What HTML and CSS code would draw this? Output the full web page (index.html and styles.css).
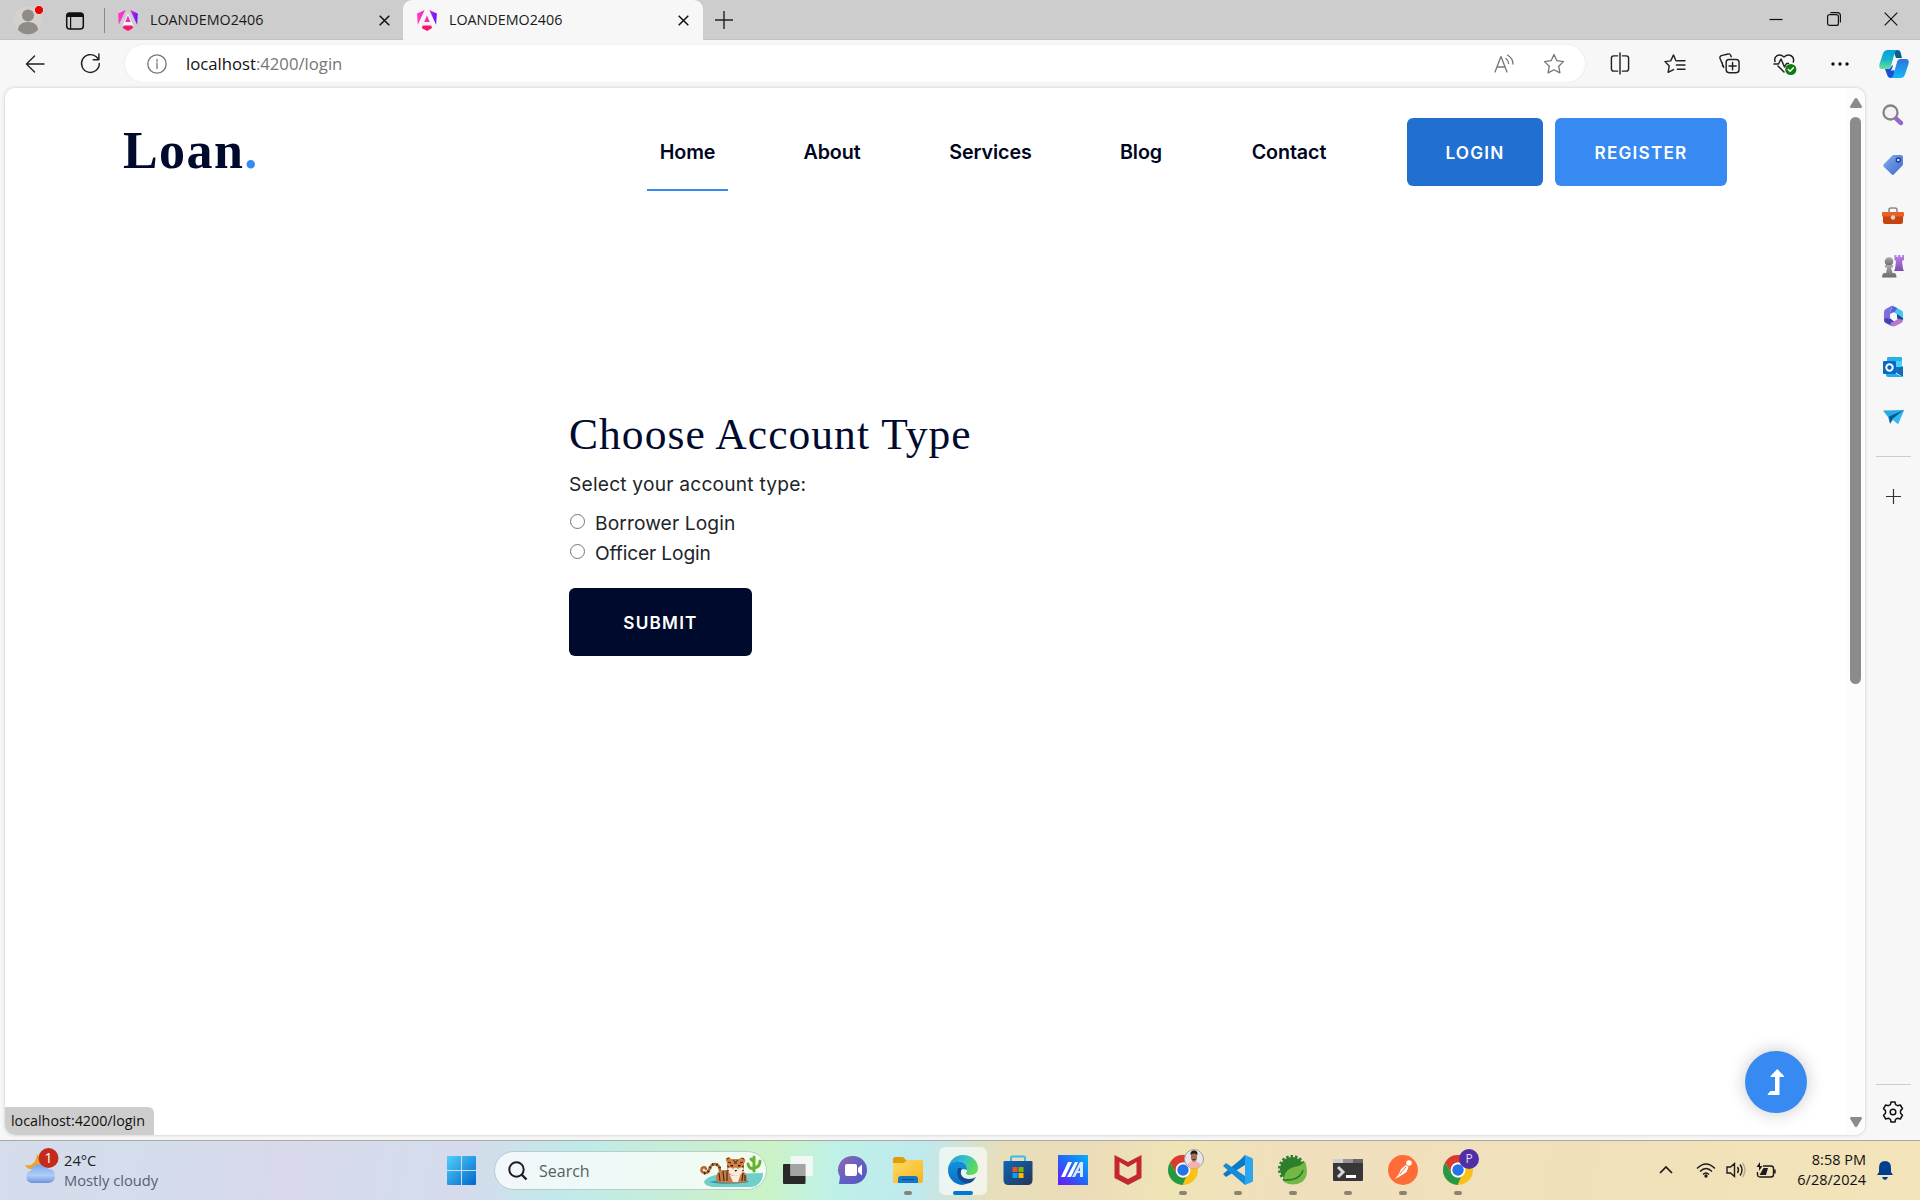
FILE: index.html
```
<!DOCTYPE html>
<html lang="en">
<head>
<meta charset="utf-8">
<title>LOANDEMO2406</title>
<link rel="stylesheet" href="styles.css">
</head>
<body>
<svg class="defs" aria-hidden="true">
  <defs>
    <linearGradient id="ng" gradientUnits="userSpaceOnUse" x1="20" y1="90" x2="215" y2="110"><stop offset="0" stop-color="#ff35c4"/><stop offset=".55" stop-color="#d925e0"/><stop offset="1" stop-color="#6a14f5"/></linearGradient>
    <linearGradient id="cloud" x1="0" y1="0" x2="0" y2="1"><stop offset="0" stop-color="#78a4ea"/><stop offset=".6" stop-color="#b1cdf8"/><stop offset="1" stop-color="#6d94dc"/></linearGradient>
    <linearGradient id="win" x1="0" y1="0" x2="1" y2="1"><stop offset="0" stop-color="#4fd0fb"/><stop offset="1" stop-color="#0067cc"/></linearGradient>
    <linearGradient id="folder" x1="0" y1="0" x2="1" y2="1"><stop offset="0" stop-color="#ffda62"/><stop offset="1" stop-color="#f7b51e"/></linearGradient>
    <linearGradient id="chat" x1="0" y1="0" x2="1" y2="1"><stop offset="0" stop-color="#9b62ae"/><stop offset=".4" stop-color="#6b63bd"/><stop offset="1" stop-color="#5157c9"/></linearGradient>
    <linearGradient id="store" x1="0" y1="0" x2="1" y2="1"><stop offset="0" stop-color="#0a69b8"/><stop offset="1" stop-color="#283257"/></linearGradient>
    <linearGradient id="arm" x1="1" y1="0" x2="0" y2="1"><stop offset="0" stop-color="#00b1ff"/><stop offset=".5" stop-color="#2467f4"/><stop offset="1" stop-color="#6d15f8"/></linearGradient>
    <linearGradient id="edgeTop" x1="0" y1="0" x2="1" y2=".4"><stop offset="0" stop-color="#1f9bd8"/><stop offset=".55" stop-color="#34c0cd"/><stop offset="1" stop-color="#5edb55"/></linearGradient>
    <linearGradient id="edgeLow" x1="0" y1="0" x2="0" y2="1"><stop offset="0" stop-color="#1292dc"/><stop offset="1" stop-color="#0b6fc9"/></linearGradient>
    <linearGradient id="copA" x1="0" y1="0" x2="0" y2="1"><stop offset="0" stop-color="#00a3dd"/><stop offset=".5" stop-color="#18b3cb"/><stop offset="1" stop-color="#67e58d"/></linearGradient>
    <linearGradient id="copB" x1="0" y1="0" x2="0" y2="1"><stop offset="0" stop-color="#3272d9"/><stop offset="1" stop-color="#10baf8"/></linearGradient>
    <linearGradient id="tag" x1="0" y1="0" x2="1" y2="1"><stop offset="0" stop-color="#82aef0"/><stop offset="1" stop-color="#3c69c9"/></linearGradient>
    <linearGradient id="grey" x1="0" y1="0" x2="0" y2="1"><stop offset="0" stop-color="#a9a9a9"/><stop offset="1" stop-color="#6c6c6c"/></linearGradient>
    <linearGradient id="violet" x1="0" y1="0" x2="0" y2="1"><stop offset="0" stop-color="#bd86e8"/><stop offset="1" stop-color="#7a4cb5"/></linearGradient>
    <symbol id="angular" viewBox="0 0 223 236">
      <path fill="#f4f0f4" d="m111 30-62 145 62 20 62-20z"/>
      <path fill="url(#ng)" d="m222 39-8 126L137 0zM8 165 0 39 85 0z"/>
      <path fill="#ec2fb9" d="m111 63 30 73H81z"/>
      <path fill="#f5156c" d="m169 202-58 33-58-33 12-28h92z"/>
    </symbol>
    <symbol id="chrome" viewBox="0 0 30 30">
      <circle cx="15" cy="15" r="15" fill="#fbc116"/>
      <path fill="#d93a31" d="M2 7.5A15 15 0 0 1 28 7.5H15a7.5 7.5 0 0 0-6.5 3.8L8.500 18.800z"/>
      <path fill="#249a48" d="M2 7.500 8.500 18.800a7.500 7.500 0 0 0 9.500 3.200L14.600 30A15 15 0 0 1 2 7.500z"/>
      <circle cx="15" cy="15" r="7.400" fill="#fff"/><circle cx="15" cy="15" r="5.700" fill="#2473e8"/>
    </symbol>
  </defs>
</svg>

<header class="titlebar">
  <div class="profile">
    <svg width="30" height="30" viewBox="0 0 30 30"><circle cx="14" cy="15" r="14" fill="#d5d1cb"/><circle cx="14" cy="10.500" r="6" fill="#8f8b87"/><path d="M4 25c0-5 4-8 10-8s10 3 10 8a14 14 0 0 1-20 0z" fill="#8f8b87"/><circle cx="25" cy="5" r="4.600" fill="#e60505" stroke="#f2dede"/></svg>
  </div>
  <div class="workspaces">
    <svg width="20" height="20" viewBox="0 0 20 20"><rect x="1.700" y="2" width="16.600" height="16" rx="3" fill="none" stroke="#111" stroke-width="1.500"/><path d="M2 6V4q0-2 2-2h12q2 0 2 2v2z" fill="#111"/><path d="M5.600 6v12" stroke="#111" stroke-width="1.200"/></svg>
  </div>
  <div class="tab">
    <svg width="20" height="21"><use href="#angular"/></svg>
    <span class="tab-title">LOANDEMO2406</span>
    <svg class="x" width="11" height="11" viewBox="0 0 11 11"><path d="m.7.7 9.600 9.600m0-9.600L.7 10.300"/></svg>
  </div>
  <div class="tab active">
    <svg width="20" height="21"><use href="#angular"/></svg>
    <span class="tab-title">LOANDEMO2406</span>
    <svg class="x" width="11" height="11" viewBox="0 0 11 11"><path d="m.7.7 9.600 9.600m0-9.600L.7 10.300"/></svg>
  </div>
  <svg class="new-tab" width="18" height="18" viewBox="0 0 18 18"><path d="M9 0v18M0 9h18"/></svg>
  <div class="window-controls">
    <svg width="14" height="14" viewBox="0 0 14 14"><path d="M.5 7.500h13"/></svg>
    <svg width="14" height="14" viewBox="0 0 14 14"><rect x=".6" y="2.600" width="10.800" height="10.800" rx="2"/><path d="M3.400.6h7q3 0 3 3v7"/></svg>
    <svg width="14" height="14" viewBox="0 0 14 14"><path d="m.7.7 12.600 12.600m0-12.600L.7 13.300"/></svg>
  </div>
</header>

<nav class="toolbar">
  <div class="slot back"><svg width="20" height="18" viewBox="0 0 22 20"><path d="M21 10H1.500M10.500 1l-9 9 9 9"/></svg></div>
  <div class="slot reload"><svg width="21" height="21" viewBox="0 0 22 22"><path d="M20.200 11A9.300 9.300 0 1 1 17 4l2.500 2.500M19.800 1v6h-6"/></svg></div>
  <div class="address">
    <svg width="20" height="20" viewBox="0 0 20 20"><circle cx="10" cy="10" r="9.200"/><path d="M10 9v5.500M10 5.400v1.800"/></svg>
    <span class="url">localhost<span>:4200/login</span></span>
    <svg class="read" width="20" height="19" viewBox="0 0 20 19"><path d="m1 18 6-15.500L13 18M3 13h8M12 4.500q2.600 2 2.600 5M13.500 1q5.500 3.300 5.500 9"/></svg>
    <svg width="22" height="22" viewBox="0 0 22 22"><path d="m11 1.500 2.900 6.200 6.600.9-4.800 4.600 1.200 6.700L11 16.700l-5.900 3.200 1.200-6.700L1.500 8.600l6.600-.9z"/></svg>
  </div>
  <div class="slot"><svg width="20" height="21" viewBox="0 0 20 22"><path d="M7.500 3H3.500Q1 3 1 5.500v11Q1 19 3.500 19h4M12.500 3h4Q19 3 19 5.500v11q0 2.500-2.500 2.500h-4M10 0v22"/></svg></div>
  <div class="slot"><svg width="21" height="22" viewBox="0 0 22 22"><path d="M13 7.700h-.5L10 1.500 7 7.700l-6 .8 4.500 4.500-1.200 6.800 5.700-3M14 7.600h8M13 12h9M14 16.500h8"/></svg></div>
  <div class="slot"><svg width="21" height="21" viewBox="0 0 22 22"><path d="M5 15 1 5.500Q.5 3.500 2.500 2.700L9.500 1q2-.5 2.700 1.500l.6 1.500M5 15q-2-2-1.500-4.500"/><rect x="7.500" y="6.800" width="13.500" height="13.800" rx="3"/><path d="M14.200 10v7.500M10.500 13.700H18"/></svg></div>
  <div class="slot"><svg width="24" height="24" viewBox="0 0 24 24"><path d="M2 9.500C.5 4.500 6 .5 11 5c5-4.500 11-.5 9.300 5M1 12h4.500l2.500-5 3.500 8 2-3.500h2M5 14l6 6"/><circle cx="17.800" cy="17.500" r="5.600" fill="#107c10" stroke="none"/><path stroke="#fff" d="m15.300 17.500 1.800 1.800 3.300-3.500"/></svg></div>
  <div class="slot"><svg width="18" height="4" viewBox="0 0 18 4"><g fill="#111" stroke="none"><circle cx="2" cy="2" r="1.700"/><circle cx="9" cy="2" r="1.700"/><circle cx="16" cy="2" r="1.700"/></g></svg></div>
  <div class="slot copilot"><svg width="30" height="28" viewBox="0 0 30 28"><g stroke="none"><path fill="#0b5e91" d="M14 0h5q2 0 2.700 2.500L23 8h-6z"/><path fill="url(#copA)" d="M9 0h10q-2.500 0-3.300 3L12 16q-.8 3-3.500 3H3.500Q-.8 19 .5 14L4 3.500Q5 0 9 0z"/><path fill="#1b4fd7" d="M6 19h3q2.500 0 3.500-3l1.500-1 3 13h-5q-3 0-3.800-3z"/><path fill="url(#copB)" d="M21 28H11q2.500 0 3.300-3L18 12q.8-3 3.500-3h5q4.300 0 3 5L26 24.500Q25 28 21 28z"/><path fill="#f7f7f7" d="M15.500 8.500h5q-2.200.8-3 3.500l-2 7q-.5 1.500-2 1.500h-2q1.300-.8 1.800-2.500z"/></g></svg></div>
</nav>

<div class="workarea">
  <main class="page">
    <div class="content">
      <header class="site-header">
        <a class="logo">Loan<span>.</span></a>
        <nav class="menu"><a class="selected">Home</a><a>About</a><a>Services</a><a>Blog</a><a>Contact</a></nav>
        <div class="actions"><a class="btn login">LOGIN</a><a class="btn register">REGISTER</a></div>
      </header>
      <form class="account">
        <h2>Choose Account Type</h2>
        <p>Select your account type:</p>
        <label><i class="radio"></i>Borrower Login</label>
        <label class="officer"><i class="radio"></i>Officer Login</label>
        <button class="btn submit" type="button">SUBMIT</button>
      </form>
      <a class="to-top"><svg width="18" height="26" viewBox="0 0 18 26"><path fill="#fff" d="M10.300 0 17 7q.5 1-.7 1h-3.800v18H2q-2 0-1-1.200L3.500 22H8V8H4.300Q3 8 3.600 7z"/></svg></a>
      <div class="status">localhost:4200/login</div>
    </div>
    <div class="scrollbar">
      <svg width="12" height="10" viewBox="0 0 12 10"><path d="M6 0q1 0 1.500 1L12 8.500Q12 10 11 10H1Q0 10 0 8.500L4.500 1Q5 0 6 0z"/></svg>
      <div class="thumb"></div>
      <svg width="12" height="10" viewBox="0 0 12 10"><path d="M6 10q-1 0-1.500-1L0 1.500Q0 0 1 0h10q1 0 1 1.500L7.500 9Q7 10 6 10z"/></svg>
    </div>
  </main>
  <aside class="sidebar">
    <div class="app"><svg width="22" height="22" viewBox="0 0 22 22"><circle cx="8.500" cy="8.500" r="7" fill="#f3f3f3" stroke="#858585" stroke-width="2.300"/><path d="m14.500 15 4.500 4" stroke="#9467cb" stroke-width="4.400" stroke-linecap="round"/></svg></div>
    <div class="app"><svg width="22" height="22" viewBox="0 0 22 22"><path fill="url(#tag)" d="M12 1h7q2 0 2 2v7q0 1-.8 1.800L12 20.300q-1.200 1.200-2.500 0l-7.700-7.600q-1.200-1.200 0-2.500l8.400-8.400Q11 1 12 1z"/><circle cx="16.300" cy="6" r="2" fill="#c8dcf7" stroke="#1f3c8f" stroke-width="1.300"/></svg></div>
    <div class="app"><svg width="22" height="18" viewBox="0 0 22 18"><path d="M7 6V3q0-2 2-2h4q2 0 2 2v3" fill="none" stroke="#8a8a8a" stroke-width="1.600"/><path fill="#c8420f" d="M1 8h20v7q0 2-2 2H3q-2 0-2-2z"/><path fill="#ea6026" d="M1 5h20q1 0 1 1v3.500H0V6q0-1 1-1z"/><circle cx="11" cy="10.500" r="2.200" fill="#d7d7d7"/></svg></div>
    <div class="app"><svg width="22" height="23" viewBox="0 0 22 23"><path fill="url(#violet)" d="M12.500 0h2v2H16V0h2.500v2H20V0h2v5l-2 1 1 8 1 2H12l1-2 1-8-1.500-1z"/><g fill="url(#grey)"><circle cx="7" cy="6.500" r="4.300"/><path d="M3 10h8v2.500H9L10.500 18H13q1.500 1 1.500 4.500H0Q0 19 1.500 18H4l1.200-5.500H3z"/></g></svg></div>
    <div class="app"><svg width="21" height="22" viewBox="0 0 22 22"><path fill="#4cc4f0" d="m10 0 9.500 5.200Q21 6 21 8v5l-7-4-6-1z"/><path fill="#5462d7" d="M10 .5 15 3l-3 4-5 2z"/><path fill="#7d6edc" d="M10 .2 8 5v9q-5-2-6.500 2Q1 16 1 15V7q0-2 1.500-3L8 .7Q9 0 10 .2z"/><path fill="#3f45b4" d="M8 8v6l4 3-2.500 4.800L2.500 18Q1 17 1 15q2-3 7-1z"/><path fill="#b977d0" d="m8 18 4-1.500 4-3 5-.5v2q0 2-1.500 3L13 21.500q-2 1-4 0-2-1.500-1-3.500z"/><path fill="#174f9e" d="m14 8.500 7 4.500v2l-6-1z"/><path fill="#f7f7f7" d="m11 7 3.700 2v4L11 15.200 7.500 13V9z"/></svg></div>
    <div class="app"><svg width="20" height="20" viewBox="0 0 20 20"><path fill="#28aee8" d="M5 0h13q1 0 1 1v12H4V1q0-1 1-1z"/><path fill="#0c74c4" d="M4 5h15v9H4z"/><path fill="#48d0f7" d="M12 4h7v6h-7z"/><path fill="#126bb5" d="m20 9-8 6 8 5z"/><path fill="#20aeec" d="m3 12 17 8H5q-2 0-2-2z"/><rect y="4" width="13" height="13" rx="1" fill="#0869c4"/><circle cx="6.500" cy="10.500" r="3.200" fill="none" stroke="#fff" stroke-width="2"/></svg></div>
    <div class="app"><svg width="21" height="16" viewBox="0 0 21 16"><path fill="#2aabe8" d="M0 1.500 21 1l-6 14-5-4-3 3-2-6z"/><path fill="#07588f" d="M21 1 6 7.500 7 15l2.500-5z"/><path fill="#35b8ef" d="M21 1 9.500 10l5.500 5z"/></svg></div>
    <hr>
    <div class="app add"><svg width="15" height="15" viewBox="0 0 15 15"><path d="M7.500 0v15M0 7.500h15" stroke="#333" stroke-width="1.200"/></svg></div>
    <hr class="lower">
    <div class="app gear"><svg width="22" height="22" viewBox="0 0 22 22"><path fill="none" stroke="#111" stroke-width="1.500" stroke-linejoin="round" d="m9 1-.6 2.600-2 1.100L3.700 4l-2.200 3.700 2 1.900v2.700l-2 1.900L3.700 18l2.700-.8 2 1.200L9 21h4l.6-2.600 2-1.200 2.700.8 2.200-3.800-2-1.900V9.600l2-1.900L18.300 4l-2.700.7-2-1.100L13 1z"/><circle cx="11" cy="11" r="2.800" fill="none" stroke="#111" stroke-width="1.500"/></svg></div>
  </aside>
</div>

<footer class="taskbar">
  <div class="weather">
    <svg width="36" height="40" viewBox="0 0 36 40"><path fill="#f3a229" d="M13 7q7 6 3 15L6 22q-4-1-5-4 11 2 12-11z"/><path fill="url(#cloud)" d="M7 36a6.500 6.500 0 0 1 0-12.500Q9 17 16 17q6 0 8.500 5 6.500 0 6.500 7t-7 7z"/><circle cx="24.500" cy="11" r="10" fill="#c42b1c"/><text x="24.500" y="16" text-anchor="middle" class="badge">1</text></svg>
    <div class="weather-text"><b>24°C</b><span>Mostly cloudy</span></div>
  </div>
  <div class="start"><svg width="29" height="29" viewBox="0 0 29 29"><path fill="url(#win)" d="M1 0h13v14H0V1Q0 0 1 0zM15 0h13q1 0 1 1v13H15zM0 15h14v14H1q-1 0-1-1zM15 15h14v13q0 1-1 1H15z"/></svg></div>
  <div class="search">
    <svg width="20" height="20" viewBox="0 0 20 20"><circle cx="8.500" cy="8.500" r="7.200" fill="none" stroke="#1c1c1c" stroke-width="2"/><path d="m13.500 13.500 5 5" stroke="#1c1c1c" stroke-width="2.400"/></svg>
    <span>Search</span>
    <svg width="64" height="34" viewBox="0 0 64 34">
      <path fill="#6fd0c9" d="M4 28q2-6 18-8l41-1q0 8-6 12-2 2-8 2H16Q5 33 4 28z"/>
      <path fill="#2b8fb0" d="M9 28q18-4 37-2 6 2-2 3-22 2-35-1z"/>
      <path fill="none" stroke="#63b32e" stroke-width="3" stroke-linecap="round" d="M54 17V3M54 15q-5 0-6-5M54 14q6-1 6-7M54 8l-3-3"/>
      <path fill="none" stroke="#b7642c" stroke-width="2.600" stroke-linecap="round" d="M5 19q-5-1-3-5 3-2 4 1M5 19c6 1 3-9 10-9q5 1 5 7"/>
      <path fill="none" stroke="#3d2417" stroke-width="2.800" stroke-dasharray="1.200 3" d="M4 19c7 1 4-9 11-9q5 1 5 7"/>
      <path fill="#c97d45" d="M16 28q-1-12 8-12h15q9 1 8 12-15 2-31 0z"/>
      <path fill="none" stroke="#432a1d" stroke-width="1.200" d="m19 19 1 8m3-10 1 10m3-10 0 10m16-8-1 8m3-6v6"/>
      <path fill="#f8efe3" d="M29 19h12l-3 9h-5z"/>
      <path fill="#cf8149" d="M26 4q4-2 5 1h8q2-3 6 0 1 3-1 4v6q-2 7-9 7t-8-7V9q-2-3-1-5z"/>
      <path fill="#f8eada" d="M27 15q4-3 6 0 3-3 5 0 3-3 6 0-2 7-8 7t-9-7z"/>
      <path fill="none" stroke="#392318" stroke-width="1" d="m33 6 2.500 2L38 6M34 9h3M28 8l3 1m12-1-3 1M27 12l2 1m15-1-2 1M27 5l2-1m13 0 2 1M27 16l2 1m15-1-2 1"/>
      <path fill="#2b1a12" d="M30.500 11h2.500v1.500h-2.500zM38 11h2.500v1.500H38zM34.300 16h3l-1.500 1.800z"/>
    </svg>
  </div>
  <div class="apps">
    <div class="task"><svg width="30" height="30" viewBox="0 0 30 30"><rect y="9" width="22.500" height="20" rx="1" fill="#292929"/><rect x="7.500" y="1" width="22.500" height="20" rx="1" fill="#f8f8f8" fill-opacity=".86"/><path fill="#a4a4a4" d="M7.500 9h15v12h-15z"/></svg></div>
    <div class="task"><svg width="30" height="30" viewBox="0 0 30 30"><path fill="url(#chat)" d="M15 1a14 14 0 1 1 0 28H1l1-7A14 14 0 0 1 15 1z"/><rect x="7" y="9" width="12" height="12" rx="2" fill="#fff"/><path fill="#fff" d="m20 13 4-3.500v11L20 17z"/></svg></div>
    <div class="task open"><svg width="30" height="30" viewBox="0 0 30 30"><path fill="#e19d08" d="M0 4q0-2 2-2h8l3 3h16v5H0z"/><path fill="url(#folder)" d="M0 8h11l3-3h15q1 0 1 1v20q0 2-2 2H0z"/><path fill="#1477c7" d="M5 28v-4q0-3 3-3h14q3 0 3 3v4z"/><path stroke="#0b4a86" d="M9 24.500h12.500"/></svg></div>
    <div class="task current"><svg width="30" height="30" viewBox="0 0 30 30"><path fill="url(#edgeLow)" d="M0 15C0 9 4 6 9 6c7 0 11 4 10 9l-4-1q-3 1-3 5c0 6 5 10 10 8q-4 3-8 3A15 15 0 0 1 0 15z"/><path fill="#104e94" d="M10 13c-3 10 4 17 12 15q4-2 6-6-3 2-7 2c-6 0-9-4-8-8 0-2 1-3 1-3z"/><path fill="url(#edgeTop)" d="M0 14C1 6 7 0 15 0c9 0 15 6 15 13q0 7-8 7-4 0-4-2 1-1 1-3 0-8-9-9Q2 6 0 14z"/></svg></div>
    <div class="task"><svg width="30" height="30" viewBox="0 0 30 30"><path d="M8 7V3q0-1.500 1.500-1.500h11Q22 1.500 22 3v4" fill="none" stroke="#32bdee" stroke-width="2"/><path fill="url(#store)" d="M1.500 6h27q1 0 1 1v18q0 5-5 5h-19q-5 0-5-5V7q0-1 1-1z"/><path fill="#f25022" d="M9.500 12h5v5h-5z"/><path fill="#7fba00" d="M15.500 12h5v5h-5z"/><path fill="#00a4ef" d="M9.500 18h5v5h-5z"/><path fill="#ffb900" d="M15.500 18h5v5h-5z"/></svg></div>
    <div class="task"><svg width="30" height="30" viewBox="0 0 30 30"><path fill="url(#arm)" d="M0 0h30v30H0z"/><path fill="#fff" d="M10 7h4L7 22H3zM17 7h3l-7 15h-4z"/><path fill="#dce9ff" d="M22 7h3v15h-3v-4h-3l-2 4h-3zm0 5-2 4h2z" fill-rule="evenodd"/></svg></div>
    <div class="task"><svg width="30" height="30" viewBox="0 0 30 30"><path fill="#c1292e" d="m1.500 0 13.500 7L28.500 0v23L15 30 1.500 23zm5 7v12.500L15 24l8.500-4.500V7L15 12z" fill-rule="evenodd"/></svg></div>
    <div class="task open"><svg width="30" height="30"><use href="#chrome"/></svg><svg class="person" width="20" height="20" viewBox="0 0 20 20"><circle cx="10" cy="10" r="9.500" fill="#e7e5ea" stroke="#a79f99"/><path fill="#f1b3ae" d="M3 16q3-4 7-4t7 4q-3 3.500-7 3.500T3 16z"/><path fill="#a56d55" d="M7 4h6v6q-1 3-3 3t-3-3z"/><path fill="#221b1b" d="M6.500 6q-.5-4.500 3.500-4.500T13.500 6Q13 4.500 10 4.500T6.500 6zM8.500 10h3v.8h-3z"/></svg></div>
    <div class="task open"><svg width="30" height="30" viewBox="0 0 30 30"><path fill="#0b79c8" d="m0 19 17-14 5-5v10L3 22z"/><path fill="#168bd8" d="m0 11 3-3 19 13v9z"/><path fill="#28a6f0" d="m22 0 7 3q1 .5 1 1.500v21q0 1-1 1.500l-7 3z"/></svg></div>
    <div class="task open"><svg width="30" height="30" viewBox="0 0 30 30"><circle cx="14" cy="14" r="12" fill="#2d7f2d"/><circle cx="14" cy="14" r="12.800" fill="none" stroke="#2d7f2d" stroke-width="2.500" stroke-dasharray="2.500 2"/><path fill="#72b843" d="M6 27q-1-12 10-15 8-1 11-6 5 15-3 21-9 5-18 0z"/><path fill="none" stroke="#2d7f2d" stroke-width="1.600" d="M5 25q17 1 20-10"/></svg></div>
    <div class="task open"><svg width="30" height="30" viewBox="0 0 30 30"><path fill="#373737" d="M1 4h28q1 0 1 1v20q0 1-1 1H1q-1 0-1-1V5q0-1 1-1z"/><path fill="#cfcfcf" d="M0 4h10v4H0z"/><path fill="#949494" d="M10 4h10v4H10z"/><path fill="#666" d="M20 4h10v4H20z"/><path d="m5 12 5 5-5 5" fill="none" stroke="#d6d6d6" stroke-width="3"/><path stroke="#fff" stroke-width="3" d="M13 21.500h10"/></svg></div>
    <div class="task open"><svg width="30" height="30" viewBox="0 0 30 30"><circle cx="15" cy="15" r="15" fill="#ff6c37"/><circle cx="21" cy="8" r="2.800" fill="#fff"/><path d="m7 24 4-5 2-5 5-4 2.500 2-2 5-6 4z" fill="#fff"/><path d="m18 12-6 7" stroke="#ff6c37"/></svg></div>
    <div class="task open"><svg width="30" height="30"><use href="#chrome"/></svg><span class="person initial">P</span></div>
  </div>
  <div class="tray">
    <svg width="14" height="8" viewBox="0 0 14 8"><path d="m1 7 6-6 6 6" stroke-width="1.700"/></svg>
    <svg class="wifi" width="20" height="15" viewBox="0 0 20 15"><path d="M1 5.500Q10-3.500 19 5.500M4 8.500q6-6 12 0M7 11.500q3-3 6 0"/><circle cx="10" cy="13" r="1" fill="#1b1b1b"/></svg>
    <svg class="volume" width="20" height="16" viewBox="0 0 20 16"><path d="M1 5h3.500l4-3.500v13l-4-3.500H1zM11.500 5q2 3 0 6M14 2.500q4 5.500 0 11"/><path d="M16.500 1q5 7 0 14" stroke="#b5aa92"/></svg>
    <svg class="battery" width="21" height="17" viewBox="0 0 21 17"><path d="M7 4h8q2.500 0 2.500 2.500v6Q17.500 15 15 15H4q-2.500 0-2.500-2.500V10M19 7.500v4"/><path d="M3.500 13h6.500l2-7H7.500zM4 0 .5 5H3v4l3.500-5H4z" fill="#1b1b1b" stroke="none"/></svg>
    <div class="clock"><span>8:58 PM</span><span>6/28/2024</span></div>
    <svg class="bell" width="16" height="19" viewBox="0 0 16 19"><path fill="#003e92" stroke="none" d="M8 0q6 0 6 7v4l2 3H0l2-3V7q0-7 6-7zM5 16h6q-1 3-3 3t-3-3z"/></svg>
  </div>
</footer>
</body>
</html>
```
FILE: styles.css
```
* { box-sizing: border-box; }
body {
  margin: 0;
  width: 1920px;
  height: 1200px;
  display: flex;
  flex-direction: column;
  overflow: hidden;
  background: #f7f7f7;
  color: #111;
  font-family: "Open Sans", "Noto Sans", sans-serif;
}
svg { display: block; flex: none; overflow: visible; }
.defs { position: absolute; width: 0; height: 0; }

/* Window title bar */
.titlebar {
  height: 40px;
  flex: none;
  display: flex;
  align-items: center;
  background: #cdcdcd;
  box-shadow: inset 0 -1px #c2c2c2;
}
.profile { padding-left: 14px; width: 60px; }
.workspaces { width: 45px; height: 25px; padding: 3px 0 0 5px; border-right: 1px solid #888; }
.tab { width: 298px; height: 40px; padding: 0 13px; display: flex; align-items: center; }
.tab.active { width: 300px; padding-left: 14px; background: #f7f7f7; border-radius: 9px 9px 0 0; }
.tab-title { flex: 1; margin-left: 12px; font-size: 14.300px; line-height: 38px; color: #1a1a1a; }
.x { fill: none; stroke: #111; stroke-width: 1.500; }
.active .x { margin-right: 1px; }
.new-tab { margin-left: 12px; stroke: #222; stroke-width: 1.400; }
.window-controls { margin-left: auto; padding: 0 22px 2px 0; display: flex; gap: 43.500px; }
.window-controls svg { fill: none; stroke: #111; stroke-width: 1.200; }

/* Navigation toolbar */
.toolbar { height: 47px; flex: none; display: flex; align-items: center; }
.toolbar svg { fill: none; stroke: #222; stroke-width: 1.500; stroke-linecap: round; stroke-linejoin: round; }
.slot { width: 55px; display: flex; justify-content: center; }
.back { width: 70px; }
.reload { width: 40px; margin-right: 15px; }
.address {
  width: 1460px;
  height: 37px;
  margin-right: 7px;
  padding: 0 20px 0 22px;
  display: flex;
  align-items: center;
  background: #fff;
  border-radius: 19px;
  box-shadow: 0 0 3px #e6e6e6;
}
.address svg { stroke: #757575; stroke-width: 1.300; }
.url { flex: 1; margin-left: 19px; font-size: 16.700px; }
.url span { color: #767676; }
.read { margin-right: 29px; }
.copilot { width: 53px; }

/* Page viewport */
.workarea { flex: 1; display: flex; min-height: 0; }
.page {
  position: relative;
  width: 1862px;
  height: 1049px;
  margin-left: 4px;
  display: flex;
  background: #fff;
  border: 1px solid #e4e4e4;
  border-radius: 11px;
  box-shadow: 0 0 3px #ddd;
  overflow: hidden;
}
.content { flex: 1; font-family: Inter, Roboto, sans-serif; }
.site-header { height: 128px; padding-left: 118px; display: flex; align-items: center; }
.logo {
  width: 524px;
  margin-top: -2px;
  font: bold 52px/64px "Liberation Serif", serif;
  letter-spacing: 1.400px;
  color: #000a2d;
}
.logo span { color: #368af1; }
.menu {
  display: grid;
  grid-template-columns: 81px 85px 109px 69px 104px;
  column-gap: 61.500px;
  font-size: 19.700px;
  font-weight: 600;
  color: #00051f;
  letter-spacing: -.1px;
  text-align: center;
}
.menu a { height: 77px; line-height: 77px; white-space: nowrap; }
.menu .selected { border-bottom: 2px solid #368af1; }
.actions { display: flex; gap: 12px; margin-left: 66px; }
.btn {
  height: 68px;
  display: flex;
  align-items: center;
  justify-content: center;
  border-radius: 6px;
  border: 0;
  color: #fff;
  font: 600 17.200px Inter, Roboto, sans-serif;
  letter-spacing: 1.200px;
}
.login { width: 136px; background: #2170d1; }
.register { width: 172px; background: #368af1; }
.account { margin: 190px 0 0 564px; font-size: 19.200px; color: #212529; }
.account h2 {
  margin: 0;
  font: 400 43.500px/56px "Liberation Serif", serif;
  letter-spacing: 1.050px;
  color: #000a2d;
}
.account p { margin: 7px 0 9px; line-height: 30px; letter-spacing: .2px; }
.account label { display: flex; align-items: center; height: 30px; letter-spacing: .1px; }
.account .officer { letter-spacing: -.15px; }
.radio { width: 15px; height: 15px; margin: -3px 10px 0 1px; border: 1px solid #767676; border-radius: 50%; }
.submit { width: 183px; margin-top: 20px; background: #000a2d; }
.to-top {
  position: absolute;
  right: 58px;
  bottom: 22px;
  width: 62px;
  height: 62px;
  display: flex;
  align-items: center;
  justify-content: center;
  border-radius: 50%;
  background: #368af1;
  box-shadow: 0 0 18px rgba(0, 0, 0, .22);
}
.status {
  position: absolute;
  left: 0;
  bottom: 0;
  width: 149px;
  height: 28px;
  padding-left: 6px;
  background: #cdcdcd;
  border-radius: 0 6px 0 0;
  font: 14.300px/28px "Open Sans", sans-serif;
  color: #111;
}
.scrollbar {
  width: 19px;
  padding: 10px 0 8px;
  display: flex;
  flex-direction: column;
  align-items: center;
  background: #fcfcfc;
}
.scrollbar svg { fill: #8b8b8b; }
.thumb { width: 11px; height: 567px; margin: 9px 0 auto; border-radius: 6px; background: #8b8b8b; }

/* Browser side panel */
.sidebar { width: 54px; padding-top: 3px; display: flex; flex-direction: column; align-items: center; }
.app { height: 50.300px; display: flex; align-items: center; justify-content: center; }
.sidebar hr { width: 35px; margin: 14px 0; border: 0; border-top: 1px solid #ccc; }
.sidebar .lower { margin: auto 0 2px; }
.gear { margin-bottom: 3px; }

/* Desktop taskbar */
.taskbar {
  height: 60px;
  flex: none;
  display: flex;
  align-items: center;
  border-top: 1px solid #a9a99f;
  background: linear-gradient(100deg, #d5dcec 0, #d3ddec 7%, #d8d9eb 15%, #d4dded 22%, #d6daec 24%, #bfeaea 30%, #c9efd0 37%, #cbf3c6 40%, #bef1e8 43.500%, #bfe9ee 48%, #e8deba 52%, #ecdcb9 57%, #efe4b6 61%, #f0dfbd 67%, #f0e1ba 85%, #f3e4b9 100%);
}
.weather { width: 422px; padding-left: 24px; display: flex; align-items: center; }
.weather svg { margin-top: -8px; }
.badge { fill: #fff; font-size: 14px; }
.weather-text { display: flex; flex-direction: column; margin: -2px 0 0 4px; font-size: 14.700px; line-height: 20px; color: #222; }
.weather-text b { font-weight: 400; }
.weather-text span { color: #596071; }
.start { width: 72px; padding-left: 25px; }
.search {
  width: 273px;
  height: 39px;
  padding: 0 2px 0 13px;
  display: flex;
  align-items: center;
  border: 1px solid #b7cec6;
  border-radius: 20px;
  background: rgba(255, 255, 255, .72);
}
.search span { flex: 1; margin-left: 11px; font-size: 16px; color: #58605e; }
.apps { display: flex; margin-left: 3px; }
.task { position: relative; width: 55px; height: 48px; padding-bottom: 1px; display: flex; align-items: center; justify-content: center; }
.task.current { width: 48px; margin: 0 3.500px; background: rgba(255, 255, 255, .6); border-radius: 6px; }
.task.open::after, .task.current::after {
  content: "";
  position: absolute;
  bottom: 0;
  width: 8px;
  height: 4px;
  border-radius: 2px;
  background: #8b836d;
}
.task.current::after { width: 20px; background: #0078d4; }
.person { position: absolute; left: 29px; top: 2px; }
.initial {
  width: 20px;
  height: 20px;
  border-radius: 50%;
  background: #512da8;
  color: #e3daf5;
  font-size: 12px;
  line-height: 20px;
  text-align: center;
}
.tray { margin-left: auto; padding-right: 27px; display: flex; align-items: center; }
.tray svg { fill: none; stroke: #1b1b1b; stroke-width: 1.400; margin-bottom: 1px; }
.tray .wifi { margin-left: 23px; }
.tray .volume { margin-left: 10px; }
.tray .battery { margin-left: 10px; }
.clock { width: 89px; display: flex; flex-direction: column; text-align: right; font-size: 14.500px; line-height: 20px; margin: -2px 11px 0 0; }
```
